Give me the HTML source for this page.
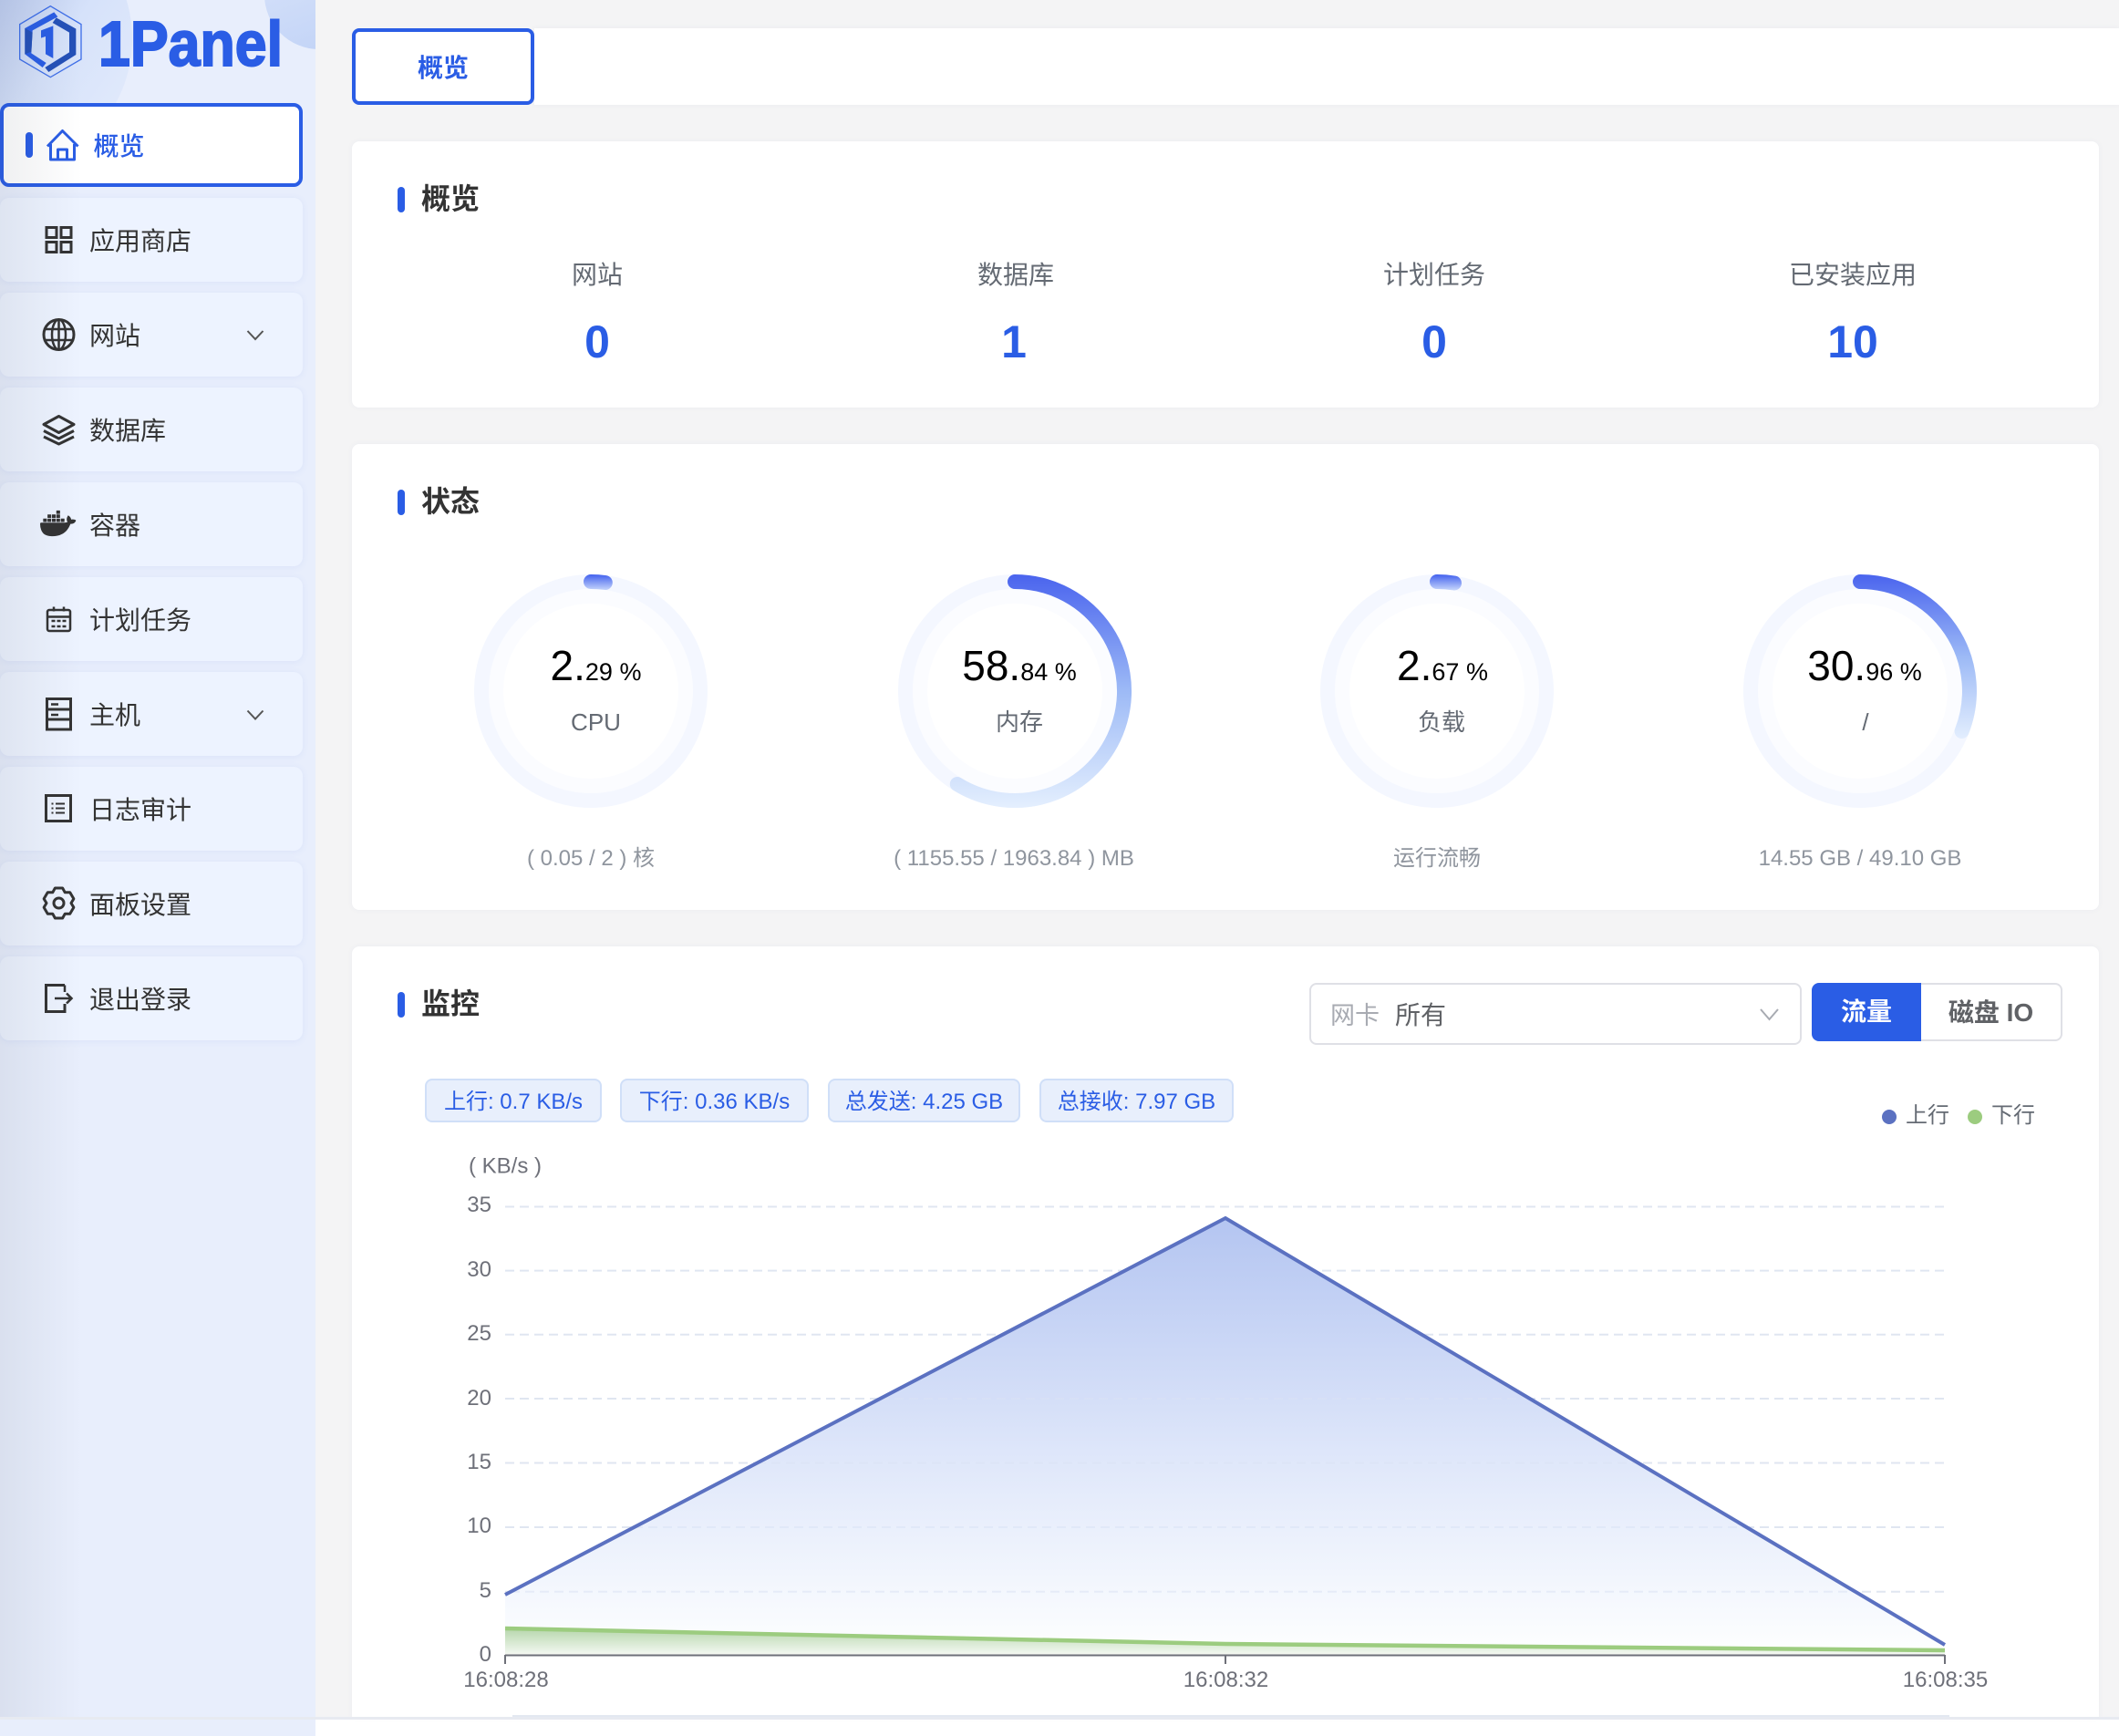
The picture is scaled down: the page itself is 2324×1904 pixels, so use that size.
<!DOCTYPE html>
<html lang="zh">
<head>
<meta charset="utf-8">
<title>1Panel</title>
<style>
*{box-sizing:border-box;margin:0;padding:0}
html,body{width:2324px;height:1904px;overflow:hidden;background:#fff;font-family:"Liberation Sans","Noto Sans CJK SC",sans-serif}
#page{position:relative;width:2324px;height:1904px;overflow:hidden;background:#fff}
.a{position:absolute;white-space:nowrap}
#side{left:0;top:0;width:346px;height:1904px;background:#e8eefc;overflow:hidden}
.blob1{left:-150px;top:-105px;width:295px;height:295px;border-radius:50%;background:linear-gradient(125deg,#a9bbe8 25%,#d6e2fa 65%,#e6edfc 100%)}
.blob2{left:290px;top:-66px;width:120px;height:120px;border-radius:50%;background:linear-gradient(160deg,#dbe5fb,#c0d2f6)}
.item{left:0;width:332px;height:92px;background:#edf3ff;border-radius:10px;box-shadow:0 1px 8px rgba(90,120,220,.09);color:#333;font-size:28px;line-height:95px;padding-left:98px}
.item.on{top:113px;background:#fff;border:4px solid #2a5de5;color:#2a5de5;font-weight:500;line-height:87px;padding-left:98.500px;box-shadow:none}
.shade{left:0;top:0;width:90px;height:1884px;background:linear-gradient(90deg,rgba(50,60,80,.08),rgba(50,60,80,0));pointer-events:none}
#main{left:346px;top:0;width:1978px;height:1884px;background:#f4f4f5}
.card{left:386px;width:1916px;background:#fff;border-radius:8px;box-shadow:0 0 6px rgba(120,130,170,.07)}
.bar{left:436px;width:8px;height:28px;background:#2a5de5;border-radius:4px}
.ttl{left:462px;font-size:32px;font-weight:700;color:#333;line-height:40px}
.lab{width:400px;text-align:center;font-size:28px;color:#646a73;line-height:40px;top:282px}
.num{width:300px;text-align:center;font-size:50px;font-weight:700;color:#2a5de5;line-height:60px;top:345px}
.tag{top:1183px;height:48px;background:#e8effc;border:2px solid #d0dff8;border-radius:8px;color:#2a5de5;font-size:24px;line-height:47px;text-align:center}
</style>
</head>
<body>
<div id="page">
  <div id="main" class="a"></div>

  <div id="side" class="a">
    <div class="a blob1"></div>
    <div class="a blob2"></div>

    <div class="a item on">概览</div>
    <div class="a item" style="top:217px">应用商店</div>
    <div class="a item" style="top:321px">网站</div>
    <div class="a item" style="top:425px">数据库</div>
    <div class="a item" style="top:529px">容器</div>
    <div class="a item" style="top:633px">计划任务</div>
    <div class="a item" style="top:737px">主机</div>
    <div class="a item" style="top:841px">日志审计</div>
    <div class="a item" style="top:945px">面板设置</div>
    <div class="a item" style="top:1049px">退出登录</div>

    <svg class="a" style="left:0;top:0" width="346" height="1200" viewBox="0 0 346 1200">
      <!-- logo -->
      <g transform="scale(.3333)">
        <polygon points="166,20 267,80 267,195 166,254 65,195 65,80" fill="none" stroke="#3f6fe8" stroke-width="4"/>
        <polygon points="82,93 178,40 190,55 107,100 103,175 152,207 140,222 82,178" fill="#2a5de5"/>
        <polygon points="82,93 107,107 103,170 82,178" fill="#2450b8"/>
        <polygon points="185,58 250,95 250,180 160,237 148,222 228,172 228,107 173,75" fill="#2450b8"/>
        <polygon points="135,100 175,85 175,192 150,178 150,120 135,125" fill="#2a5de5"/>
      </g>
      <text x="108" y="72" font-family="Liberation Sans" font-weight="700" font-size="70" fill="#2a5de5" stroke="#2a5de5" stroke-width="2" textLength="202" lengthAdjust="spacingAndGlyphs">1Panel</text>

      <!-- active marker + home -->
      <rect x="28" y="145" width="8" height="28" rx="4" fill="#2a5de5"/>
      <path d="M52 160.500 68.500 143.500 85.500 160.500M55.500 158V175H81.500V158M63.500 175V164H73.500V175" fill="none" stroke="#2a5de5" stroke-width="3" stroke-linejoin="round"/>

      <g fill="none" stroke="#333" stroke-width="3">
        <!-- grid -->
        <rect x="51" y="249.500" width="11" height="11"/><rect x="67" y="249.500" width="11" height="11"/>
        <rect x="51" y="265.500" width="11" height="11"/><rect x="67" y="265.500" width="11" height="11"/>
        <!-- globe -->
        <circle cx="64.500" cy="367" r="16.500"/>
        <ellipse cx="64.500" cy="367" rx="7.500" ry="16.500" stroke-width="2.500"/>
        <path d="M64.500 350.500V383.500M49 361H80M49 373H80" stroke-width="2.500"/>
        <!-- layers -->
        <path d="M64.500 456.500 81 465.500 64.500 474.500 48 465.500Z" stroke-linejoin="round"/>
        <path d="M48 472.500 64.500 481 81 472.500M48 479 64.500 487 81 479" stroke-linejoin="round"/>
        <!-- calendar -->
        <rect x="52" y="669" width="25" height="23" rx="2" stroke-width="2.500"/>
        <path d="M52 676.500H77M59 665.500V670.500M70 665.500V670.500" stroke-width="2.500"/>
        <path d="M56.500 681H60.500M62.500 681H66.500M68.500 681H72.500M56.500 687H60.500M62.500 687H66.500M68.500 687H72.500" stroke-width="2.500"/>
        <!-- server -->
        <rect x="51.500" y="766.500" width="26" height="33.500"/>
        <path d="M51.500 778H77.500M51.500 789H77.500"/>
        <path d="M56 772.500H64M56 784H64" stroke-width="2.500"/>
        <!-- log -->
        <rect x="50.500" y="872.500" width="27" height="28"/>
        <path d="M61 881.500H71M61 886.500H71M61 891.500H71M56.500 881.500H58.500M56.500 886.500H58.500M56.500 891.500H58.500" stroke-width="2"/>
        <!-- gear -->
        <g transform="translate(64.500 990.500)" stroke-linejoin="round">
          <path d="M-4.110 -16.500 4.110 -16.500 6.750 -11.690 12.230 -11.810 16.340 -4.690 13.500 0 16.340 4.690 12.230 11.810 6.750 11.690 4.110 16.500 -4.110 16.500 -6.750 11.690 -12.230 11.810 -16.340 4.690 -13.500 0 -16.340 -4.690 -12.230 -11.810 -6.750 -11.690Z"/>
          <circle r="5.500"/>
        </g>
        <!-- logout -->
        <path d="M71 1080.500H50.500V1109.500H71V1101"/>
        <path d="M71 1088V1080.500M60 1095H78M73 1089.500 78.500 1095 73 1100.500" stroke-width="2.500"/>
        <!-- chevrons -->
        <path d="M271.500 363 280 372 288.500 363M271.500 779.500 280 788.500 288.500 779.500" stroke="#555" stroke-width="2"/>
      </g>
      <!-- docker -->
      <path transform="translate(44 554.300) scale(1.640)" fill="#333" d="M13.983 11.078h2.119a.186.186 0 00.186-.185V9.006a.186.186 0 00-.186-.186h-2.119a.185.185 0 00-.185.185v1.888c0 .102.083.185.185.185m-2.954-5.43h2.118a.186.186 0 00.186-.186V3.574a.186.186 0 00-.186-.185h-2.118a.185.185 0 00-.185.185v1.888c0 .102.082.185.185.186m0 2.716h2.118a.187.187 0 00.186-.186V6.29a.186.186 0 00-.186-.185h-2.118a.185.185 0 00-.185.185v1.887c0 .102.082.185.185.186m-2.93 0h2.12a.186.186 0 00.184-.186V6.29a.185.185 0 00-.185-.185H8.1a.185.185 0 00-.185.185v1.887c0 .102.083.185.185.186m-2.964 0h2.119a.186.186 0 00.185-.186V6.29a.185.185 0 00-.185-.185H5.136a.186.186 0 00-.186.185v1.887c0 .102.084.185.186.186m5.893 2.715h2.118a.186.186 0 00.186-.185V9.006a.186.186 0 00-.186-.186h-2.118a.185.185 0 00-.185.185v1.888c0 .102.082.185.185.185m-2.93 0h2.12a.185.185 0 00.184-.185V9.006a.185.185 0 00-.184-.186h-2.12a.185.185 0 00-.184.185v1.888c0 .102.083.185.185.185m-2.964 0h2.119a.185.185 0 00.185-.185V9.006a.185.185 0 00-.184-.186h-2.12a.186.186 0 00-.186.186v1.887c0 .102.084.185.186.185m-2.92 0h2.12a.185.185 0 00.184-.185V9.006a.185.185 0 00-.184-.186h-2.12a.185.185 0 00-.184.185v1.888c0 .102.082.185.185.185M23.763 9.89c-.065-.051-.672-.51-1.954-.51-.338.001-.676.03-1.01.087-.248-1.7-1.653-2.53-1.716-2.566l-.344-.199-.226.327c-.284.438-.49.922-.612 1.43-.23.97-.09 1.882.403 2.661-.595.332-1.55.413-1.744.42H.751a.751.751 0 00-.75.748 11.376 11.376 0 00.692 4.062c.545 1.428 1.355 2.48 2.41 3.124 1.18.723 3.1 1.137 5.275 1.137.983.003 1.963-.086 2.93-.266a12.248 12.248 0 003.823-1.389c.98-.567 1.86-1.288 2.61-2.136 1.252-1.418 1.998-2.997 2.553-4.4h.221c1.372 0 2.215-.549 2.68-1.009.309-.293.55-.65.707-1.046l.098-.288z"/>
    </svg>
    <div class="a shade"></div>
  </div>

  <!-- top tab bar -->
  <div class="a" style="left:586px;top:31px;width:1738px;height:84px;background:#fff;box-shadow:0 0 5px rgba(120,130,170,.08)"></div>
  <div class="a" style="left:386px;top:31px;width:200px;height:84px;background:#fff;border:4px solid #2a5de5;border-radius:8px;color:#2a5de5;font-size:28px;font-weight:700;text-align:center;line-height:79px">概览</div>

  <!-- cards -->
  <div class="a card" style="top:155px;height:292px"></div>
  <div class="a card" style="top:487px;height:511px"></div>
  <div class="a card" style="top:1038px;height:846px;border-radius:8px 8px 0 0"></div>

  <div class="a bar" style="top:205px"></div>
  <div class="a ttl" style="top:198px">概览</div>
  <div class="a lab" style="left:455px">网站</div>
  <div class="a lab" style="left:914px">数据库</div>
  <div class="a lab" style="left:1373px">计划任务</div>
  <div class="a lab" style="left:1832px">已安装应用</div>
  <div class="a num" style="left:505px">0</div>
  <div class="a num" style="left:962px">1</div>
  <div class="a num" style="left:1423px">0</div>
  <div class="a num" style="left:1882px">10</div>

  <div class="a bar" style="top:537px"></div>
  <div class="a ttl" style="top:530px">状态</div>

  <div class="a bar" style="top:1088px"></div>
  <div class="a ttl" style="top:1080.500px">监控</div>

  <!-- select -->
  <div class="a" style="left:1436px;top:1078px;width:540px;height:68px;background:#fff;border:2px solid #dfe0e6;border-radius:8px"></div>
  <div class="a" style="left:1459px;top:1094px;font-size:27px;line-height:40px;color:#a8abb2">网卡</div>
  <div class="a" style="left:1530px;top:1094px;font-size:28px;line-height:40px;color:#606266">所有</div>
  <!-- buttons -->
  <div class="a" style="left:2107px;top:1078px;width:155px;height:64px;background:#fff;border:2px solid #dfe0e6;border-left:0;border-radius:0 8px 8px 0;color:#606266;font-size:28px;font-weight:700;text-align:center;line-height:62px">磁盘 IO</div>
  <div class="a" style="left:1987px;top:1078px;width:120px;height:64px;background:#2a5de5;border-radius:8px 0 0 8px;color:#fff;font-size:28px;font-weight:700;text-align:center;line-height:64px">流量</div>

  <!-- tags -->
  <div class="a tag" style="left:466px;width:194px">上行: 0.7 KB/s</div>
  <div class="a tag" style="left:680px;width:207px">下行: 0.36 KB/s</div>
  <div class="a tag" style="left:908px;width:211px">总发送: 4.25 GB</div>
  <div class="a tag" style="left:1140px;width:213px">总接收: 7.97 GB</div>

  <!-- graphics -->
  <svg class="a" style="left:0;top:0" width="2324" height="1904" viewBox="0 0 2324 1904" font-family="Liberation Sans, Noto Sans CJK SC, sans-serif">
    <defs>
      <linearGradient id="gs" gradientUnits="userSpaceOnUse" x1="0" y1="630" x2="0" y2="650"><stop offset="0" stop-color="#4261ee"/><stop offset="1" stop-color="#dbe8fd"/></linearGradient>
      <linearGradient id="gm" gradientUnits="userSpaceOnUse" x1="0" y1="630" x2="0" y2="886"><stop offset="0" stop-color="#4a64ee"/><stop offset=".5" stop-color="#9dbaf6"/><stop offset="1" stop-color="#e4effe"/></linearGradient>
      <linearGradient id="gd" gradientUnits="userSpaceOnUse" x1="0" y1="630" x2="0" y2="812"><stop offset="0" stop-color="#4a64ee"/><stop offset=".5" stop-color="#9dbaf6"/><stop offset="1" stop-color="#e4effe"/></linearGradient>
      <linearGradient id="fb" gradientUnits="userSpaceOnUse" x1="0" y1="1336" x2="0" y2="1815"><stop offset="0" stop-color="#b4c5f1"/><stop offset=".55" stop-color="#dfe7fa"/><stop offset="1" stop-color="#feffff"/></linearGradient>
      <linearGradient id="fg" gradientUnits="userSpaceOnUse" x1="0" y1="1786" x2="0" y2="1815"><stop offset="0" stop-color="#b6d6ac"/><stop offset="1" stop-color="#f5f9f3"/></linearGradient>
    </defs>

    <!-- gauges -->
    <g fill="none">
      <g stroke="#fbfcff" stroke-width="16">
        <circle cx="648" cy="758" r="104"/><circle cx="1113" cy="758" r="104"/><circle cx="1576" cy="758" r="104"/><circle cx="2040" cy="758" r="104"/>
      </g>
      <g stroke="#f4f7ff" stroke-width="16">
        <circle cx="648" cy="758" r="120"/><circle cx="1113" cy="758" r="120"/><circle cx="1576" cy="758" r="120"/><circle cx="2040" cy="758" r="120"/>
      </g>
      <g stroke-width="16" stroke-linecap="round">
        <path d="M648 638A120 120 0 0 1 663.800 639" stroke="url(#gs)"/>
        <path d="M1113 638A120 120 0 1 1 1049.800 860" stroke="url(#gm)"/>
        <path d="M1576 638A120 120 0 0 1 1595 639.500" stroke="url(#gs)"/>
        <path d="M2040 638A120 120 0 0 1 2151.600 802" stroke="url(#gd)"/>
      </g>
    </g>
    <g text-anchor="middle" fill="#000">
      <text x="653.500" y="746" font-size="46">2.<tspan font-size="27">29 %</tspan></text>
      <text x="1118" y="746" font-size="46">58.<tspan font-size="27">84 %</tspan></text>
      <text x="1582" y="746" font-size="46">2.<tspan font-size="27">67 %</tspan></text>
      <text x="2045" y="746" font-size="46">30.<tspan font-size="27">96 %</tspan></text>
    </g>
    <g text-anchor="middle" fill="#646a73" font-size="26">
      <text x="653.500" y="801">CPU</text>
      <text x="1118" y="801">内存</text>
      <text x="1581" y="801">负载</text>
      <text x="2046" y="801">/</text>
    </g>
    <g text-anchor="middle" fill="#8f959e" font-size="24">
      <text x="648" y="949">( 0.05 / 2 ) 核</text>
      <text x="1112" y="949">( 1155.55 / 1963.84 ) MB</text>
      <text x="1576" y="949">运行流畅</text>
      <text x="2040" y="949">14.55 GB / 49.10 GB</text>
    </g>

    <!-- select chevron -->
    <path d="M1931 1107 1940.500 1118 1950 1107" fill="none" stroke="#a8abb2" stroke-width="2"/>

    <!-- legend -->
    <circle cx="2072" cy="1225" r="8" fill="#5b71c1"/>
    <text x="2090" y="1231" font-size="24" fill="#646a73">上行</text>
    <circle cx="2166" cy="1225" r="8" fill="#9ccc7f"/>
    <text x="2184" y="1231" font-size="24" fill="#646a73">下行</text>

    <!-- chart -->
    <text x="514" y="1286.500" font-size="24" fill="#6e7079">( KB/s )</text>
    <g stroke="#e0e6f1" stroke-width="2" stroke-dasharray="10 6">
      <path d="M554 1323.500H2133M554 1393.600H2133M554 1463.800H2133M554 1534H2133M554 1604.500H2133M554 1675H2133M554 1745.700H2133"/>
    </g>
    <g text-anchor="end" font-size="24" fill="#6e7079">
      <text x="539" y="1329">35</text><text x="539" y="1400">30</text><text x="539" y="1470">25</text>
      <text x="539" y="1541">20</text><text x="539" y="1611">15</text><text x="539" y="1681">10</text>
      <text x="539" y="1752">5</text><text x="539" y="1822">0</text>
    </g>
    <polygon points="554,1749 1344,1336 2133,1804 2133,1815 554,1815" fill="url(#fb)"/>
    <polygon points="554,1786 1344,1803 2133,1810 2133,1815 554,1815" fill="url(#fg)"/>
    <g stroke="#dbe3f5" stroke-width="2" stroke-dasharray="10 6" opacity=".55">
      <path d="M965 1534H1678M830 1604.500H1797M695 1675H1916M560 1745.700H2035"/>
    </g>
    <polyline points="554,1749 1344,1336 2133,1804" fill="none" stroke="#5b71c1" stroke-width="4"/>
    <polyline points="554,1786 1344,1803 2133,1810" fill="none" stroke="#9ccc7f" stroke-width="4.500"/>
    <path d="M554 1815.500H2133M554 1815V1825M1344 1815V1825M2133 1815V1825" fill="none" stroke="#6e7079" stroke-width="2"/>
    <g text-anchor="middle" font-size="24" fill="#6e7079">
      <text x="555" y="1850">16:08:28</text>
      <text x="1344.500" y="1850">16:08:32</text>
      <text x="2133.500" y="1850">16:08:35</text>
    </g>

    <!-- bottom lines -->
    <rect x="562" y="1881" width="1576" height="4" fill="#e3e8f1"/>
    <rect x="0" y="1883" width="2324" height="3" fill="#e7eaf1"/>
  </svg>
</div>
</body>
</html>
